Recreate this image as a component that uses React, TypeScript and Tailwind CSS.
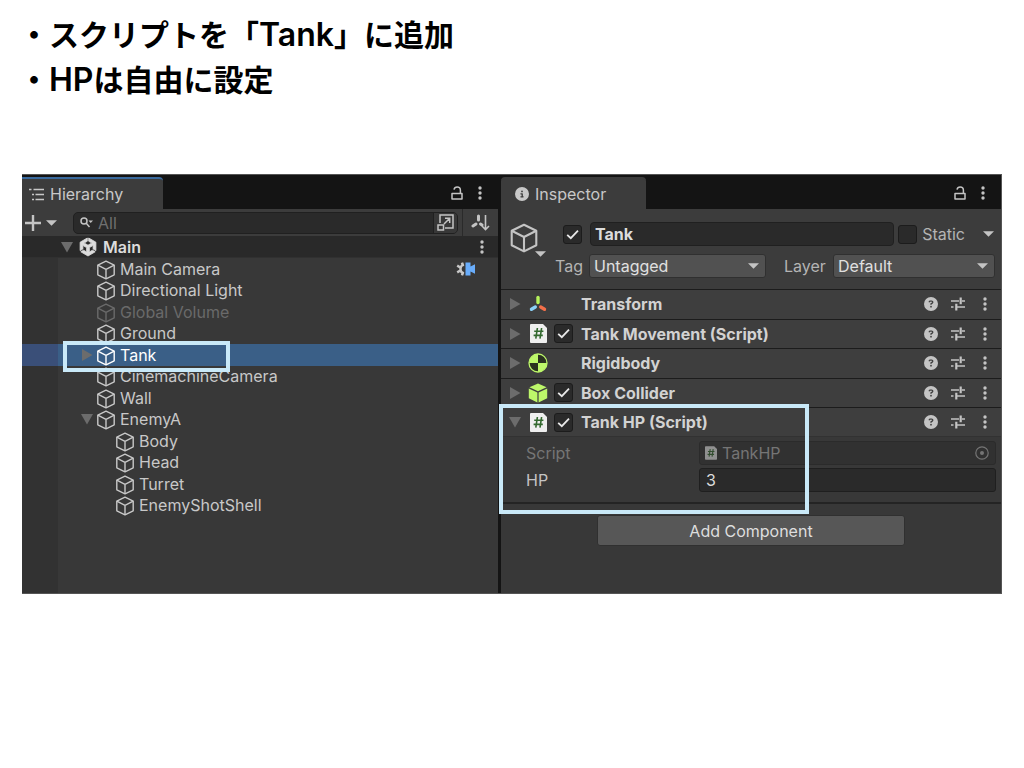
import type { ReactNode } from "react";
import { FaCircleInfo, FaCircleQuestion, FaUnity } from "react-icons/fa6";

type TreeItem = {
  name: string;
  depth?: 1 | 2;
  arrow?: "open" | "closed";
  selected?: boolean;
  inactive?: boolean;
  camera?: boolean;
};

const treeItems: TreeItem[] = [
  { name: "Main Camera", camera: true },
  { name: "Directional Light" },
  { name: "Global Volume", inactive: true },
  { name: "Ground" },
  { name: "Tank", arrow: "closed", selected: true },
  { name: "CinemachineCamera" },
  { name: "Wall" },
  { name: "EnemyA", arrow: "open" },
  { name: "Body", depth: 2 },
  { name: "Head", depth: 2 },
  { name: "Turret", depth: 2 },
  { name: "EnemyShotShell", depth: 2 },
];

const components = [
  { title: "Transform", icon: <TransformIcon />, toggle: false },
  { title: "Tank Movement (Script)", icon: <ScriptIcon />, toggle: true },
  { title: "Rigidbody", icon: <RigidbodyIcon />, toggle: false },
  { title: "Box Collider", icon: <BoxColliderIcon />, toggle: true },
];

function CubeIcon({ className }: { className?: string }) {
  return (
    <svg viewBox="0 0 20 20" fill="none" stroke="currentColor" strokeWidth="1.4" strokeLinejoin="round" className={className}>
      <path d="M10 1.2 18.2 5.2V14.8L10 18.9 1.8 14.8V5.2Z" />
      <path d="M1.8 5.2 10 9.3 18.2 5.2M10 9.3V18.9" />
    </svg>
  );
}

function Arrow({ open }: { open?: boolean }) {
  return (
    <svg viewBox="0 0 12 12" fill="currentColor" className="size-3 shrink-0 text-[#6c6c6c]">
      <path d={open ? "M0 1H12L6 11.5Z" : "M1 0 11.5 6 1 12Z"} />
    </svg>
  );
}

function Caret({ className }: { className?: string }) {
  return (
    <svg viewBox="0 0 12 6" fill="currentColor" className={`h-[6px] w-[11px] shrink-0 text-[#c4c4c4] ${className ?? ""}`}>
      <path d="M0 0H12L6 6Z" />
    </svg>
  );
}

function KebabIcon() {
  return (
    <svg viewBox="0 0 4 14" fill="currentColor" className="h-[14px] w-1">
      <circle cx="2" cy="2" r="1.7" />
      <circle cx="2" cy="7" r="1.7" />
      <circle cx="2" cy="12" r="1.7" />
    </svg>
  );
}

function LockIcon() {
  return (
    <svg viewBox="0 0 12 14" fill="none" stroke="currentColor" strokeWidth="1.5" className="h-[14px] w-3">
      <path d="M1 7.5H11V13H1Z" strokeLinejoin="round" />
      <path d="M3 3.6C3.4 1.8 4.6 1 6.1 1 8.1 1 9.4 2.3 9.4 4.2V7.5" />
    </svg>
  );
}

function PresetIcon() {
  return (
    <svg viewBox="0 0 14 14" fill="none" stroke="currentColor" className="size-[14px]">
      <path d="M0 4H8M11 4H14M0 10H2.5M5 10H14" strokeWidth="1.5" />
      <path d="M9.7 .5V7.2M5.3 6.8V13.5" strokeWidth="2.2" />
    </svg>
  );
}

function ScriptIcon({ className = "h-[19px] w-[17px]" }: { className?: string }) {
  return (
    <svg viewBox="0 0 17 19" className={className}>
      <path d="M1 0H13L17 4V18Q17 19 16 19H1Q0 19 0 18V1Q0 0 1 0Z" fill="#efefef" />
      <path d="M7.4 4 5.8 14.6M11.6 4 10 14.6M4.2 7.3H13.4M3.6 11.4H12.8" stroke="#33692f" strokeWidth="1.6" />
    </svg>
  );
}

function TransformIcon() {
  return (
    <svg viewBox="0 0 18 18" strokeWidth="3.4" strokeLinecap="round" className="size-[18px]">
      <path d="M9 2.5V7.5" stroke="#b6f35c" />
      <path d="M6.3 12 2.5 14.3" stroke="#8ad0f7" />
      <path d="M11.7 12 15.5 14.3" stroke="#f3704a" />
    </svg>
  );
}

function RigidbodyIcon() {
  return (
    <svg viewBox="0 0 20 20" className="size-5">
      <circle cx="10" cy="10" r="9" fill="#2b3320" stroke="#bdf76a" strokeWidth="1.3" />
      <path d="M10 10V1A9 9 0 0 0 1 10ZM10 10V19A9 9 0 0 0 19 10Z" fill="#bdf76a" />
    </svg>
  );
}

function BoxColliderIcon() {
  return (
    <svg viewBox="0 0 20 20" fill="#bdf76a" className="size-5">
      <path d="M10 .5 18.6 4.2 10 8.2 1.4 4.2Z" />
      <path d="M.8 5.4 9.4 9.4V19.4L.8 15.3ZM19.2 5.4 10.6 9.4V19.4L19.2 15.3Z" />
    </svg>
  );
}

function CameraBadge() {
  return (
    <svg viewBox="0 0 20 14" className="h-[14px] w-5">
      <path
        d="M8 2.6A4.5 4.5 0 0 0 8 11.4M6.6 3 6 .6M3.9 5.2 1.2 3.6M3.9 8.8 1.2 10.4M6.6 11 6 13.4"
        fill="none"
        stroke="#c8c8c8"
        strokeWidth="2.4"
      />
      <path d="M9.5 .5H14.5V4.6L19 2.2V11.8L14.5 9.4V13.5H9.5Z" fill="#69adfb" />
    </svg>
  );
}

function IconButton({ label, children }: { label: string; children: ReactNode }) {
  return (
    <button type="button" aria-label={label} className="flex h-5 w-4 items-center justify-center text-[#c4c4c4]">
      {children}
    </button>
  );
}

function Checkbox({ label, checked }: { label: string; checked?: boolean }) {
  return (
    <span className="relative flex size-[19px] shrink-0">
      <input
        type="checkbox"
        aria-label={label}
        defaultChecked={checked}
        className="peer size-full appearance-none rounded-[3px] border border-[#1c1c1c] bg-[#2a2a2a]"
      />
      <svg
        viewBox="0 0 19 19"
        fill="none"
        stroke="#e8e8e8"
        strokeWidth="1.8"
        className="pointer-events-none absolute inset-0 hidden size-full peer-checked:block"
      >
        <path d="M4.2 9.8 7.8 13.2 15 5.6" />
      </svg>
    </span>
  );
}

function Dropdown({ id, value }: { id: string; value: string }) {
  return (
    <span className="relative flex w-full items-center">
      <select
        id={id}
        defaultValue={value}
        className="h-6 w-full appearance-none rounded-[3px] border border-[#303030] bg-[#515151] pl-1 text-[#e0e0e0]"
      >
        <option>{value}</option>
      </select>
      <Caret className="pointer-events-none absolute right-[7px]" />
    </span>
  );
}

function TabActions() {
  return (
    <div className="ml-auto flex items-center gap-[7px] pr-[10px]">
      <IconButton label="Lock">
        <LockIcon />
      </IconButton>
      <IconButton label="Menu">
        <KebabIcon />
      </IconButton>
    </div>
  );
}

function TreeRow({ item }: { item: TreeItem }) {
  return (
    <li
      className={`relative flex items-center ${item.depth === 2 ? "pl-[74px]" : "pl-[55px]"} ${
        item.selected
          ? "bg-[linear-gradient(to_right,#3a4f78_36px,#3a5f87_36px)] text-white"
          : item.inactive
            ? "text-[#6a6a6a]"
            : "text-[#c8c8c8]"
      }`}
    >
      <span className="flex w-[19px] shrink-0 justify-center">
        {item.arrow && <Arrow open={item.arrow === "open"} />}
      </span>
      <CubeIcon className="mt-[2px] size-5 shrink-0" />
      <span className="ml-1">{item.name}</span>
      {item.camera && (
        <span className="mr-[22px] ml-auto">
          <CameraBadge />
        </span>
      )}
      {item.selected && (
        <span className="pointer-events-none absolute -top-[3px] left-[41px] z-10 h-[31px] w-[167px] border-4 border-[#c9e9f8]" />
      )}
    </li>
  );
}

function Hierarchy() {
  return (
    <section className="flex min-w-0 flex-[476] flex-col bg-[#383838]">
      <div className="flex h-[34px] items-center bg-[#141414] pt-[2px]">
        <h2 className="flex h-full w-[141px] items-center gap-[6px] rounded-tr-[4px] border-t-2 border-[#3a6a9e] bg-[#3c3c3c] pl-[7px] text-[#c8c8c8]">
          <svg viewBox="0 0 15 13" fill="none" stroke="currentColor" strokeWidth="1.5" className="h-[13px] w-[15px]">
            <path d="M0 1.5H2.5M4.5 1.5H15M3 6.5H5M6.5 6.5H15M3 11.5H5M6.5 11.5H15" />
          </svg>
          Hierarchy
        </h2>
        <TabActions />
      </div>

      <div className="flex h-[27px] items-center bg-[#3c3c3c]">
        <button type="button" aria-label="Create" className="flex w-[51px] items-center gap-[5px] pl-[3px] text-[#c4c4c4]">
          <svg viewBox="0 0 16 16" stroke="currentColor" strokeWidth="2.4" className="size-4">
            <path d="M8 0V16M0 8H16" />
          </svg>
          <Caret />
        </button>
        <label className="flex h-[22px] min-w-0 flex-1 items-center rounded-[5px] border border-[#202020] bg-[#2a2a2a] pl-[6px]">
          <svg viewBox="0 0 13 11" fill="none" stroke="#c4c4c4" strokeWidth="1.5" className="h-[11px] w-[13px] shrink-0">
            <circle cx="4" cy="4" r="3" />
            <path d="M6 6 9.5 10" />
            <path d="M8.5 3.5H13L10.7 6Z" fill="#c4c4c4" stroke="none" />
          </svg>
          <input
            type="text"
            aria-label="Search"
            placeholder="All"
            className="min-w-0 flex-1 bg-transparent pl-[5px] outline-none placeholder:text-[#707070]"
          />
          <span className="flex h-full w-[24px] items-center justify-center rounded-r-[4px] border-l border-[#202020] bg-[#383838]">
            <svg viewBox="0 0 17 17" fill="none" stroke="#c4c4c4" strokeWidth="1.5" className="size-[17px]">
              <path d="M3 9V1H16V14H8" />
              <path d="M1 11H6.5V16H1ZM7 10 12.5 4.5M8 4.3H12.7V9" />
            </svg>
          </span>
        </label>
        <button
          type="button"
          aria-label="Sort"
          className="ml-1 flex h-full w-[36px] items-center justify-center border-l border-[#2a2a2a]"
        >
          <svg viewBox="0 0 19 17" fill="none" stroke="#c4c4c4" className="h-[17px] w-[19px]">
            <path d="M7.5 2V6M5 10 2 12M9.5 10 11 11" strokeWidth="3" strokeLinecap="round" />
            <path d="M14.5 1V15.5M11 12 14.5 15.5 18 12" strokeWidth="1.6" />
          </svg>
        </button>
      </div>

      <div className="flex-1 bg-[linear-gradient(to_right,#323232_36px,#383838_36px)]">
        <div className="flex h-[22px] items-center border-b border-[#303030] bg-[#292929] pr-2 pl-[39px] text-[#dcdcdc]">
          <Arrow open />
          <FaUnity stroke="currentColor" strokeWidth="24" className="ml-[6px] size-[18px] overflow-visible" />
          <h3 className="ml-[6px] font-semibold">Main</h3>
          <span className="ml-auto">
            <IconButton label="Scene menu">
              <KebabIcon />
            </IconButton>
          </span>
        </div>
        <ul className="grid h-[258px] grid-rows-12">
          {treeItems.map((item) => (
            <TreeRow key={item.name} item={item} />
          ))}
        </ul>
      </div>
    </section>
  );
}

type ComponentHeaderProps = {
  title: string;
  icon: ReactNode;
  toggle?: boolean;
  open?: boolean;
};

function ComponentHeader({ title, icon, toggle, open }: ComponentHeaderProps) {
  return (
    <div className="flex h-full items-center border-t border-[#1c1c1c] bg-[#3e3e3e] pr-2 pl-2">
      <Arrow open={open} />
      <span className="ml-[7px] flex w-5 justify-center">{icon}</span>
      <span className="ml-[6px] w-[19px]">{toggle && <Checkbox label={title} checked />}</span>
      <h3 className="ml-2 font-bold text-[#d2d2d2]">{title}</h3>
      <div className="ml-auto flex items-center gap-[11px]">
        <IconButton label="Help">
          <FaCircleQuestion className="size-[14px]" />
        </IconButton>
        <IconButton label="Presets">
          <PresetIcon />
        </IconButton>
        <IconButton label="Component menu">
          <KebabIcon />
        </IconButton>
      </div>
    </div>
  );
}

function Inspector() {
  return (
    <section className="flex min-w-0 flex-[500] flex-col bg-[#383838]">
      <div className="flex h-[34px] items-center bg-[#141414] pt-[2px]">
        <h2 className="flex h-full w-[145px] items-center gap-[6px] rounded-t-[4px] border-t-2 border-[#3c3c3c] bg-[#3c3c3c] pl-[14px] text-[#c8c8c8]">
          <FaCircleInfo className="size-[14px]" />
          Inspector
        </h2>
        <TabActions />
      </div>

      <div className="flex h-[80px] bg-[#3c3c3c] pt-[13px] pr-[6px] text-[#b4b4b4]">
        <div className="relative w-[54px] pt-px pl-2">
          <CubeIcon className="size-[30px] text-[#c4c4c4]" />
          <Caret className="absolute top-[29px] left-[34px]" />
        </div>
        <div className="flex min-w-0 flex-1 flex-col gap-2">
          <div className="flex h-6 items-center">
            <span className="ml-2">
              <Checkbox label="Active" checked />
            </span>
            <input
              type="text"
              aria-label="Name"
              defaultValue="Tank"
              className="ml-2 h-6 min-w-0 flex-1 rounded-[4px] border border-[#202020] bg-[#2a2a2a] pl-1 font-bold text-[#dcdcdc]"
            />
            <span className="ml-1">
              <Checkbox label="Static" />
            </span>
            <span className="ml-[5px]">Static</span>
            <Caret className="mr-px ml-[18px]" />
          </div>
          <div className="flex h-6 items-center">
            <label htmlFor="tag" className="w-[34px]">
              Tag
            </label>
            <div className="min-w-0 flex-[177]">
              <Dropdown id="tag" value="Untagged" />
            </div>
            <label htmlFor="layer" className="ml-[18px] w-[49px]">
              Layer
            </label>
            <div className="min-w-0 flex-[162]">
              <Dropdown id="layer" value="Default" />
            </div>
          </div>
        </div>
      </div>

      <div className="grid h-[118px] grid-rows-4">
        {components.map((component) => (
          <ComponentHeader key={component.title} {...component} />
        ))}
      </div>

      <div className="relative border-b-2 border-[#242424] pb-[10px]">
        <div className="h-[29px]">
          <ComponentHeader title="Tank HP (Script)" icon={<ScriptIcon />} toggle open />
        </div>
        <div className="flex flex-col gap-[3px] border-t border-[#323232] pt-1 pr-[5px] pl-[25px] text-[#c4c4c4]">
          <div className="flex h-6 items-center text-[#757575]">
            <span className="w-[173px]">Script</span>
            <div className="flex h-6 min-w-0 flex-1 items-center rounded-[3px] border border-[#2b2b2b] bg-[#313131] pr-[6px] pl-[5px]">
              <ScriptIcon className="h-[14px] w-3 opacity-50" />
              <span className="ml-[5px]">TankHP</span>
              <svg viewBox="0 0 14 14" fill="none" stroke="currentColor" className="ml-auto size-[14px]">
                <circle cx="7" cy="7" r="6.2" strokeWidth="1.2" />
                <circle cx="7" cy="7" r="2" fill="currentColor" stroke="none" />
              </svg>
            </div>
          </div>
          <div className="flex h-6 items-center">
            <label htmlFor="hp" className="w-[173px]">
              HP
            </label>
            <input
              id="hp"
              type="text"
              defaultValue="3"
              className="h-6 min-w-0 flex-1 rounded-[3px] border border-[#1f1f1f] bg-[#2a2a2a] pl-[6px] text-[#dcdcdc]"
            />
          </div>
        </div>
        <span className="pointer-events-none absolute -top-[3px] -left-[2px] z-10 h-[110px] w-[310px] border-4 border-[#c9e9f8]" />
      </div>

      <button
        type="button"
        className="mx-auto mt-[11px] h-[31px] w-[308px] rounded-[3px] border border-[#303030] bg-[#575757] text-[#dedede]"
      >
        Add Component
      </button>
    </section>
  );
}

export default function App() {
  return (
    <main className="min-h-screen bg-white px-[22px] pt-3 font-['Inter','Noto_Sans_CJK_JP',sans-serif]">
      <ul className="-ml-[3px] text-[30px] leading-[45px] font-semibold text-black">
        <li className="h-[45px]">
          ・スクリプトを「<span className="text-[32px]">Tank</span>」に追加
        </li>
        <li className="h-[45px]">
          ・<span className="text-[32px]">HP</span>は自由に設定
        </li>
      </ul>
      <div className="mt-[72px] flex min-h-[420px] gap-[3px] border border-l-0 border-[#555555] bg-[#141414] text-base leading-5">
        <Hierarchy />
        <Inspector />
      </div>
    </main>
  );
}
